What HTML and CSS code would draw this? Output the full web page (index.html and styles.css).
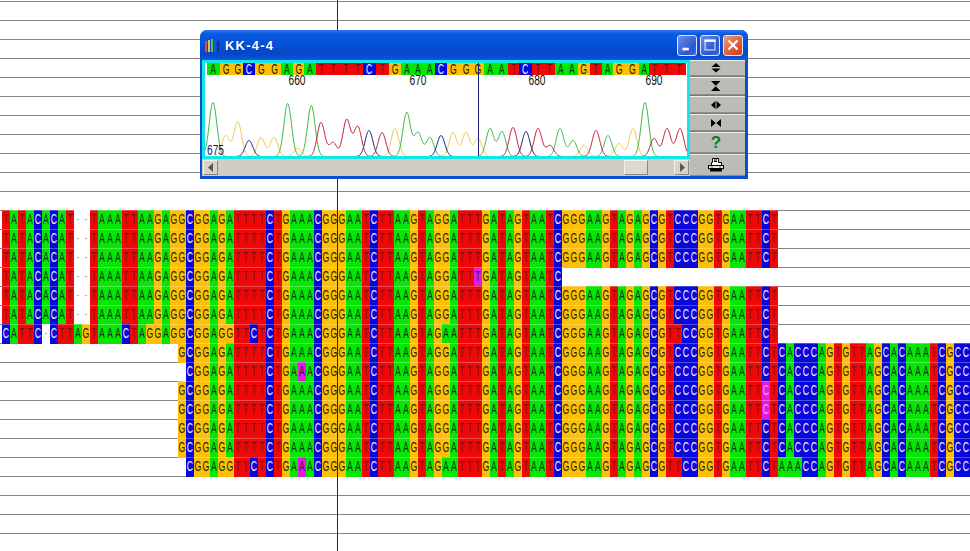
FILE: index.html
```html
<!DOCTYPE html>
<html lang="en">
<head>
<meta charset="utf-8">
<title>KK-4-4</title>
<link rel="stylesheet" href="styles.css">
</head>
<body>
<main class="desktop">
  <div class="alignment" id="alignment"></div>
  <div class="cursor-line"></div>

  <section class="window">
    <header class="titlebar">
      <svg class="app-icon" width="15" height="14" viewBox="0 0 15 14">
        <rect x="0" y="2" width="2" height="11" fill="#d8503c"/>
        <rect x="3" y="1" width="2" height="12" fill="#e8c040"/>
        <rect x="6" y="0" width="2" height="13" fill="#58c060"/>
        <rect x="9" y="1" width="2" height="12" fill="#3050c0"/>
        <rect x="12" y="2" width="2" height="11" fill="#103090"/>
      </svg>
      <h1 class="title">KK-4-4</h1>
      <div class="caption-buttons">
        <button class="cap cap-blue" aria-label="Minimize"><svg width="20" height="20" viewBox="0 0 20 20"><rect x="5" y="13" width="7" height="3" fill="#fff"/></svg></button>
        <button class="cap cap-blue" aria-label="Maximize"><svg width="20" height="20" viewBox="0 0 20 20"><rect x="4.500" y="4.500" width="11" height="11" fill="none" stroke="#fff"/><rect x="4" y="4" width="12" height="2.500" fill="#fff"/></svg></button>
        <button class="cap cap-red" aria-label="Close"><svg width="20" height="20" viewBox="0 0 20 20"><path d="M5 5l10 10M15 5L5 15" stroke="#fff" stroke-width="2.400" fill="none"/></svg></button>
      </div>
    </header>
    <div class="window-body">
      <div class="viewer">
        <div class="client">
          <div class="strip" id="strip"></div>
          <svg class="plot" id="plot" width="482" height="81" viewBox="205 75 482 81"></svg>
          <div class="cursor-inner"></div>
        </div>
        <div class="scrollbar">
          <button class="scroll-btn" aria-label="Left"><svg width="6" height="9" viewBox="0 0 6 9"><path d="M5 0v9L0 4.500z" fill="#555"/></svg></button>
          <div class="scroll-track"><div class="scroll-thumb"></div></div>
          <button class="scroll-btn" aria-label="Right"><svg width="6" height="9" viewBox="0 0 6 9"><path d="M1 0v9l5-4.500z" fill="#555"/></svg></button>
        </div>
      </div>
      <div class="tools">
        <button class="tool tool-a" aria-label="Zoom vertical in"><svg width="10" height="10" viewBox="0 0 10 10"><path d="M5 0l4.500 4h-9zM.500 5.500h9L5 9.500z" fill="#000"/></svg></button>
        <button class="tool tool-b" aria-label="Zoom vertical out"><svg width="10" height="10" viewBox="0 0 10 10"><path d="M0 0h9.500L4.750 4.800zM4.750 5.200L9.500 10H0z" fill="#000"/></svg></button>
        <button class="tool tool-a" aria-label="Zoom horizontal in"><svg width="10" height="8" viewBox="0 0 10 8"><path d="M4.500 0v8L0 4zM5.500 0L10 4 5.500 8z" fill="#000"/></svg></button>
        <button class="tool tool-a" aria-label="Zoom horizontal out"><svg width="10" height="8" viewBox="0 0 10 8"><path d="M0 0l4.700 4L0 8zM10 0v8L5.300 4z" fill="#000"/></svg></button>
        <button class="tool tool-q" aria-label="Help">?</button>
        <button class="tool tool-p" aria-label="Print"><svg width="16" height="14" viewBox="0 0 16 14"><path d="M4.500.500h6v4h3v3h-10v-3h1z" fill="#fff" stroke="#000"/><path d="M6 2h3M6 3.500h3" stroke="#000"/><rect x=".5" y="7.500" width="15" height="3" fill="#e8e8e8" stroke="#000"/><rect x="2" y="11" width="12" height="2.500" fill="#000"/><rect x="3" y="8.500" width="2" height="1" fill="#19a030"/><rect x="11" y="8.500" width="2" height="1" fill="#d03020"/></svg></button>
      </div>
    </div>
  </section>
</main>
<script src="app.js"></script>
</body>
</html>
```
FILE: styles.css
```css
* { box-sizing: border-box; }
html, body { margin: 0; padding: 0; }
body { background: #fff; }

.desktop {
  position: relative;
  width: 970px;
  height: 551px;
  overflow: hidden;
  padding-top: 210px;
  background-color: #fff;
  background-image: linear-gradient(#858585 1px, transparent 1px);
  background-size: 100% 19px;
  background-position: 0 1px;
  font-family: "Liberation Sans", sans-serif;
}

/* alignment */
.alignment { display: flex; flex-direction: column; padding-left: 2px; }
.row { display: flex; align-items: flex-start; height: 19px; }
.cell {
  flex: 0 0 8px;
  width: 8px;
  height: 20px;
  font-size: 14px;
  line-height: 19px;
  box-shadow: inset 0 1px rgba(255, 255, 255, .28);
}
/* the sequencer's letters are tall and narrow: the glyph box is squeezed into its 8px column */
.glyph {
  display: block;
  width: 12px;
  margin-left: -2px;
  text-align: center;
  transform: scaleX(.62);
}
.blank { box-shadow: none; }
.gap { background: #fff; color: #b8b8b8; box-shadow: none; }
.a { background: #08e608; color: #063a0c; }
.g { background: #fdbf07; color: #2a1c00; }
.c { background: #0808dc; color: #f0f0ff; }
.t { background: #ee0808; color: #8a0808; }
.mark { background: #e01ce0; }
.mark.a, .mark.t { color: #4a0a4a; }
.mark.c { color: #f0a0f0; }

.cursor-line {
  position: absolute;
  left: 337px;
  top: 0;
  width: 1px;
  height: 551px;
  background: #1c1c7c;
}

/* window */
.window {
  position: absolute;
  left: 200px;
  top: 30px;
  z-index: 2;
  width: 548px;
  height: 149px;
  display: flex;
  flex-direction: column;
  padding: 0 3px 3px 2px;
  background: #0a4fd2;
  border-radius: 7px 7px 0 0;
}
.titlebar {
  flex: 0 0 30px;
  margin: 0 -3px 0 -2px;
  padding: 0 5px 0 5px;
  display: flex;
  align-items: center;
  border-radius: 7px 7px 0 0;
  background: linear-gradient(#2a78ee 0, #0a5ae2 4px, #0550d8 14px, #0646c6 24px, #0a58e0 30px);
}
.app-icon { flex: none; margin-top: 1px; }
.title {
  margin: 1px 0 0 5px;
  flex: 1;
  color: #fff;
  font: bold 13px/16px "Liberation Sans", sans-serif;
  letter-spacing: 1.2px;
  text-shadow: 1px 1px 0 #0a3aa0;
}
.caption-buttons { display: flex; gap: 3px; }
.cap {
  width: 20px;
  height: 21px;
  padding: 0;
  display: flex;
  align-items: center;
  justify-content: center;
  border: 1px solid #dfe8fb;
  border-radius: 3px;
}
.cap-blue { background: linear-gradient(135deg, #6f90e8, #2a56d0 70%, #3a68de); }
.cap-red { background: linear-gradient(135deg, #ee9a78, #dc5028 70%, #c84020); }

.window-body { flex: 1; display: flex; min-height: 0; }
.viewer { width: 488px; display: flex; flex-direction: column; }
.client {
  position: relative;
  height: 99px;
  border: 3px solid #12e6e6;
  background: #fff;
  display: flex;
  flex-direction: column;
}
.strip { display: flex; flex: 0 0 12px; margin-left: 2px; }
.strip-cell {
  height: 12px;
  font-size: 14px;
  line-height: 13px;
  overflow: hidden;
}
.strip-cell .glyph { width: 100%; margin-left: 0; }
.plot { display: block; flex: none; }
.trace { fill: none; stroke-width: 1; stroke-linejoin: round; }
.trace-a { stroke: #3cb84a; }
.trace-g { stroke: #f0c84a; }
.trace-c { stroke: #14207c; }
.trace-t { stroke: #c81c38; }
.pos { font-size: 14px; fill: #111; text-anchor: middle; }
.pos-left { fill: #141470; text-anchor: start; }
.cursor-inner {
  position: absolute;
  left: 273px;
  top: 0;
  bottom: 0;
  width: 1px;
  background: #1c1c7c;
}

.scrollbar { flex: 1; display: flex; background: #d0cdc6; padding: 1px; }
.scroll-btn {
  flex: 0 0 15px;
  padding: 0;
  display: flex;
  align-items: center;
  justify-content: center;
  background: #d6d3cb;
  border: 1px solid;
  border-color: #f0eee8 #8a877f #8a877f #f0eee8;
}
.scroll-track { flex: 1; display: flex; justify-content: flex-end; padding-right: 26px; }
.scroll-thumb {
  width: 24px;
  background: #dcd9d1;
  border: 1px solid;
  border-color: #f4f2ec #8a877f #8a877f #f4f2ec;
}

.tools { flex: 0 0 55px; display: flex; flex-direction: column; background: #7c7c7c; gap: 1px; }
.tool {
  padding: 0 3px 0 0;
  display: flex;
  align-items: center;
  justify-content: center;
  background: #bbbbb7;
  border: 0;
  border-top: 1px solid #efefea;
  border-bottom: 1px solid #8c8c88;
  flex: 0 0 17px;
  color: #000;
}
.tool-a:first-child { flex-basis: 16px; }
.tool-b { flex-basis: 18px; }
.tool-q {
  flex-basis: 21px;
  color: #0c7a22;
  font: bold 17px/1 "Liberation Sans", sans-serif;
}
.tool-p { flex: 1; }
```
FILE: app.js
```js
(function () {
  var base = "TATACACAT--TAAATTAAGAGGCGGAGATTTTCTGAAACGGGAATCTTAAGTAGGATTTGATAGTAATCGGGAAGTAGAGCGTCCCGGTGAATTCT";
  var ext = "CACCCAGTGTTAGCACAAATCGCC";
  var ext2 = "AAACCAGTGTTAGCACAAATCGCC";
  // variant read with its own head and two substitutions further on
  var alt = "CATTC-CTTAGTAAACTAGGAGGCGGAGGTTCT" + base.slice(33);
  alt = alt.slice(0, 55) + "A" + alt.slice(56, 84) + "T" + alt.slice(85);

  var rows = [
    { s: base, from: 0 },
    { s: base, from: 0 },
    { s: base, from: 0 },
    { s: base.slice(0, 70), from: 0, mark: 59 },
    { s: base, from: 0 },
    { s: base, from: 0 },
    { s: alt, from: 0 },
    { s: base + ext, from: 22 },
    { s: base + ext, from: 23, mark: 37 },
    { s: base + ext, from: 22, mark: 95 },
    { s: base + ext, from: 22, mark: 95 },
    { s: base + ext, from: 22 },
    { s: base + ext, from: 22 },
    { s: alt + ext2, from: 23, mark: 37 }
  ];

  function glyph(ch) {
    var g = document.createElement("span");
    g.className = "glyph";
    g.textContent = ch;
    return g;
  }

  var host = document.getElementById("alignment");
  rows.forEach(function (r) {
    var row = document.createElement("div");
    row.className = "row";
    for (var i = 0; i < r.s.length; i++) {
      var cell = document.createElement("span");
      var ch = r.s[i];
      if (i < r.from) {
        cell.className = "cell blank";
      } else if (ch === "-") {
        cell.className = "cell gap";
        cell.appendChild(glyph("-"));
      } else {
        cell.className = "cell " + ch.toLowerCase() + (i === r.mark ? " mark" : "");
        cell.appendChild(glyph(ch));
      }
      row.appendChild(cell);
    }
    host.appendChild(row);
  });

  // base calls of the trace window: letter and centre x on the page
  var calls = [
    ["A",213.3],["G",225.7],["G",237.7],["C",249],["G",261],["G",274.3],["A",287.7],["G",297.7],
    ["A",311.3],["T",321.7],["T",333],["T",346.7],["T",357.7],["C",369],["T",382.3],["G",395],
    ["A",406.7],["A",418.3],["A",430],["C",441],["G",453.3],["G",466.7],["G",478.3],["A",490],
    ["A",502.7],["T",513],["C",526],["T",538],["T",550.7],["A",560],["A",573],["G",584],
    ["T",596],["A",608],["G",619],["G",633],["A",645],["T",654],["T",667],["T",680]
  ];
  var strip = document.getElementById("strip");
  var left = 207;
  calls.forEach(function (c, i) {
    var right = i < calls.length - 1 ? (c[1] + calls[i + 1][1]) / 2 : 686;
    var el = document.createElement("span");
    el.className = "strip-cell " + c[0].toLowerCase();
    el.style.width = (right - left) + "px";
    el.appendChild(glyph(c[0]));
    strip.appendChild(el);
    left = right;
  });

  // peak x, apex y (page coordinates); baseline is y=156
  var traces = {
    g: [[225.7,135],[237.7,121],[261,137],[274,137],[297.7,148],[395,128],[453,132],[466,132],[478,138],[584,145],[619,143],[633,128]],
    a: [[213,102],[287.7,103],[311.3,105],[406.7,112],[418,132],[430,137],[490,128],[502,131],[560,128],[573,140],[608,135],[645,102]],
    c: [[249,140],[369,130],[441,135],[526,131]],
    t: [[321,122],[333,142],[346.7,119],[357.7,126],[382,132],[513,127],[538,128],[550,145],[596,130],[654,138],[667,128],[680,128]]
  };
  var ns = "http://www.w3.org/2000/svg";
  var plot = document.getElementById("plot");
  Object.keys(traces).forEach(function (k) {
    var d = "";
    for (var x = 205; x <= 687; x += 0.5) {
      var h = 0;
      traces[k].forEach(function (p) {
        var u = (x - p[0]) / 3.8;
        h += (156 - p[1]) * Math.exp(-u * u / 2);
      });
      d += (d ? "L" : "M") + x + " " + (156 - h + 0.5).toFixed(2);
    }
    var path = document.createElementNS(ns, "path");
    path.setAttribute("d", d);
    path.setAttribute("class", "trace trace-" + k);
    plot.appendChild(path);
  });
  [["660",297,85],["670",418,85],["680",537,85],["690",654,85],["675",207,155]].forEach(function (l) {
    var t = document.createElementNS(ns, "text");
    t.setAttribute("x", l[1]);
    t.setAttribute("y", l[2]);
    t.setAttribute("class", l[0] === "675" ? "pos pos-left" : "pos");
    t.setAttribute("textLength", "17");
    t.setAttribute("lengthAdjust", "spacingAndGlyphs");
    t.textContent = l[0];
    plot.appendChild(t);
  });
})();
```
